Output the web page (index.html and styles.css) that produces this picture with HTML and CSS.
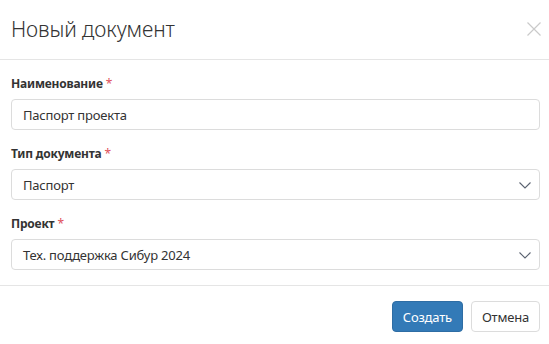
FILE: index.html
```html
<!DOCTYPE html>
<html lang="ru">
<head>
    <meta charset="UTF-8">
    <meta name="viewport" content="width=device-width, initial-scale=1.0">
    <title>Новый документ</title>
    <link rel="stylesheet" href="styles.css">
</head>
<body>
    <div class="modal">
        <div class="modal-header">
            <h4 class="modal-title">Новый документ</h4>
            <button class="close" type="button">
                <svg width="14" height="14" viewBox="0 0 14 14">
                    <path d="M0.5 0.5 L13.5 13.5 M13.5 0.5 L0.5 13.5" stroke="#cacaca" stroke-width="1.2" fill="none"/>
                </svg>
            </button>
        </div>
        <div class="modal-body">
            <div class="field">
                <label>Наименование <span class="req">*</span></label>
                <div class="control">Паспорт проекта</div>
            </div>
            <div class="field">
                <label>Тип документа <span class="req">*</span></label>
                <div class="control select">
                    <span>Паспорт</span>
                    <svg class="chevron" width="12" height="7" viewBox="0 0 12 7">
                        <path d="M0.5 0.5 L6 6 L11.5 0.5" stroke="#5a6270" stroke-width="1.1" fill="none"/>
                    </svg>
                </div>
            </div>
            <div class="field">
                <label>Проект <span class="req">*</span></label>
                <div class="control select">
                    <span>Тех. поддержка Сибур 2024</span>
                    <svg class="chevron" width="12" height="7" viewBox="0 0 12 7">
                        <path d="M0.5 0.5 L6 6 L11.5 0.5" stroke="#5a6270" stroke-width="1.1" fill="none"/>
                    </svg>
                </div>
            </div>
        </div>
        <div class="modal-footer">
            <button class="btn btn-primary" type="button">Создать</button>
            <button class="btn btn-default" type="button">Отмена</button>
        </div>
    </div>
</body>
</html>
```

FILE: styles.css
```css
body {
    margin: 0;
    padding: 0;
    font-family: "Noto Sans", "Open Sans", sans-serif;
    font-size: 13px;
    letter-spacing: -0.2px;
    color: #333;
    background-color: #fff;
}

.modal {
    width: 549px;
    height: 344px;
    overflow: hidden;
}

.modal-header {
    height: 59px;
    padding: 0 8px 0 11px;
    border-bottom: 1px solid #e5e5e5;
    display: flex;
    align-items: center;
    justify-content: space-between;
}

.modal-title {
    margin: 0;
    font-size: 21px;
    font-weight: 300;
    letter-spacing: -0.1px;
    color: #333;
    padding-bottom: 1px;
}

.close {
    background: none;
    border: none;
    padding: 0;
    width: 14px;
    height: 14px;
    cursor: pointer;
    margin-top: -1px;
}

.modal-body {
    padding: 15px 9px 15px 11px;
    border-bottom: 1px solid #e5e5e5;
}

.field {
    margin-bottom: 15px;
}

.field:last-child {
    margin-bottom: 0;
}

.field label {
    display: block;
    font-weight: 700;
    font-size: 12px;
    line-height: 18px;
    margin-bottom: 6px;
    color: #333;
}

.req {
    color: #e0505a;
    font-weight: 400;
}

.control {
    height: 29px;
    border: 1px solid #dcdcdc;
    border-radius: 4px;
    padding: 0 11px;
    display: flex;
    align-items: center;
    justify-content: space-between;
    color: #333;
}

.chevron {
    margin-right: -3px;
    margin-top: 1px;
}

.modal-footer {
    padding: 15px 9px 0 11px;
    display: flex;
    justify-content: flex-end;
    gap: 8px;
}

.btn {
    height: 31px;
    padding: 0 10px;
    font-family: inherit;
    font-size: 13px;
    letter-spacing: -0.2px;
    border-radius: 4px;
    cursor: pointer;
}

.btn-primary {
    background-color: #337ab7;
    border: 1px solid #2e6da4;
    color: #fff;
}

.btn-default {
    background-color: #fff;
    border: 1px solid #dcdcdc;
    color: #333;
}
```
